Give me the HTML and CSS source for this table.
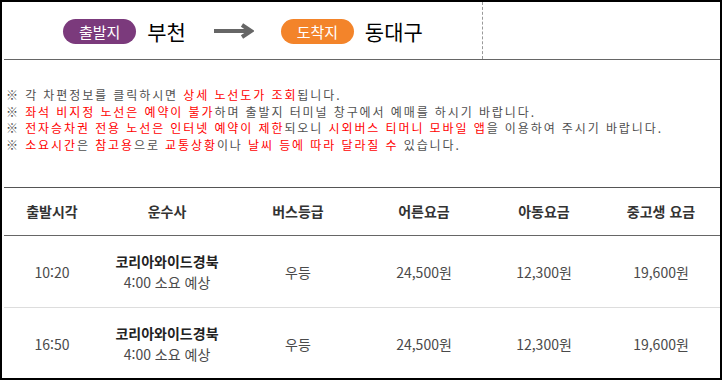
FILE: index.html
```html
<!DOCTYPE html>
<html lang="ko">
<head>
<meta charset="utf-8">
<link rel="stylesheet" href="styles.css">
</head>
<body>
<div class="frame">
  <div class="top">
    <div class="route">
      <span class="pill pill-dep">출발지</span>
      <span class="city">부천</span>
      <svg class="arrow" width="40" height="16" viewBox="0 0 40 16">
        <path d="M0 8 H36" stroke="#666" stroke-width="4" fill="none"/>
        <path d="M28 2 L37 8 L28 14" stroke="#666" stroke-width="4" fill="none"/>
      </svg>
      <span class="pill pill-arr">도착지</span>
      <span class="city">동대구</span>
    </div>
    <div class="side"></div>
  </div>
  <div class="notes">
    <p>※ 각 차편정보를 클릭하시면 <em>상세 노선도가 조회</em>됩니다.</p>
    <p>※ <em>좌석 비지정 노선은 예약이 불가</em>하며 출발지 터미널 창구에서 예매를 하시기 바랍니다.</p>
    <p>※ <em>전자승차권 전용 노선은 인터넷 예약이 제한</em>되오니 <em>시외버스 티머니 모바일 앱</em>을 이용하여 주시기 바랍니다.</p>
    <p>※ <em>소요시간</em>은 <em>참고용</em>으로 <em>교통상황</em>이나 <em>날씨 등에 따라 달라질 수</em> 있습니다.</p>
  </div>
  <div class="table">
    <div class="row head">
      <div>출발시각</div><div>운수사</div><div>버스등급</div><div>어른요금</div><div>아동요금</div><div>중고생 요금</div>
    </div>
    <div class="row">
      <div>10:20</div>
      <div class="company"><strong>코리아와이드경북</strong><span>4:00 소요 예상</span></div>
      <div>우등</div><div>24,500원</div><div>12,300원</div><div>19,600원</div>
    </div>
    <div class="row">
      <div>16:50</div>
      <div class="company"><strong>코리아와이드경북</strong><span>4:00 소요 예상</span></div>
      <div>우등</div><div>24,500원</div><div>12,300원</div><div>19,600원</div>
    </div>
  </div>
</div>
</body>
</html>
```
FILE: styles.css
```css
* { box-sizing: border-box; }
html, body { margin: 0; padding: 0; background: #fff; }
body { font-family: "Noto Sans CJK KR", "Noto Sans", sans-serif; }
.frame {
  width: 722px;
  height: 380px;
  border: 2px solid #000;
  overflow: hidden;
}
.top {
  display: flex;
  height: 58px;
  margin-left: 2px;
  border-bottom: 1px solid #666;
}
.route {
  width: 479px;
  display: flex;
  align-items: center;
  justify-content: center;
  border-right: 1px dashed #999;
  padding-top: 1px;
}
.side { flex: 1; }
.pill {
  display: inline-flex;
  align-items: center;
  justify-content: center;
  width: 73px;
  height: 25px;
  border-radius: 13px;
  color: #fff;
  font-size: 15px;
  line-height: 1;
}
.pill-dep { background: #7b3a7c; }
.pill-arr { background: #f3842a; }
.city {
  font-size: 21px;
  line-height: 1;
  color: #000;
  margin-left: 11px;
}
.arrow { margin: 0 27px 0 28px; }
.notes {
  padding: 27px 0 0 4px;
  font-size: 12px;
  line-height: 16.5px;
  color: #505050;
  letter-spacing: 1.9px;
}
.notes p { margin: 0; white-space: nowrap; }
.notes em { font-style: normal; color: #f00; }
.table {
  margin: 34px 0 0 2px;
  border-top: 1px solid #555;
}
.row {
  display: grid;
  grid-template-columns: 96px 134px 128px 124px 116px 118px;
  height: 72px;
  border-bottom: 1px solid #ddd;
  align-items: center;
  text-align: center;
  font-size: 14px;
  color: #4a4a4a;
}
.row.head {
  height: 48px;
  border-bottom: 1px solid #666;
  font-weight: bold;
  color: #333;
  padding-bottom: 1px;
}
.company {
  display: flex;
  flex-direction: column;
  line-height: 21px;
}
.company strong { color: #222; }
```
